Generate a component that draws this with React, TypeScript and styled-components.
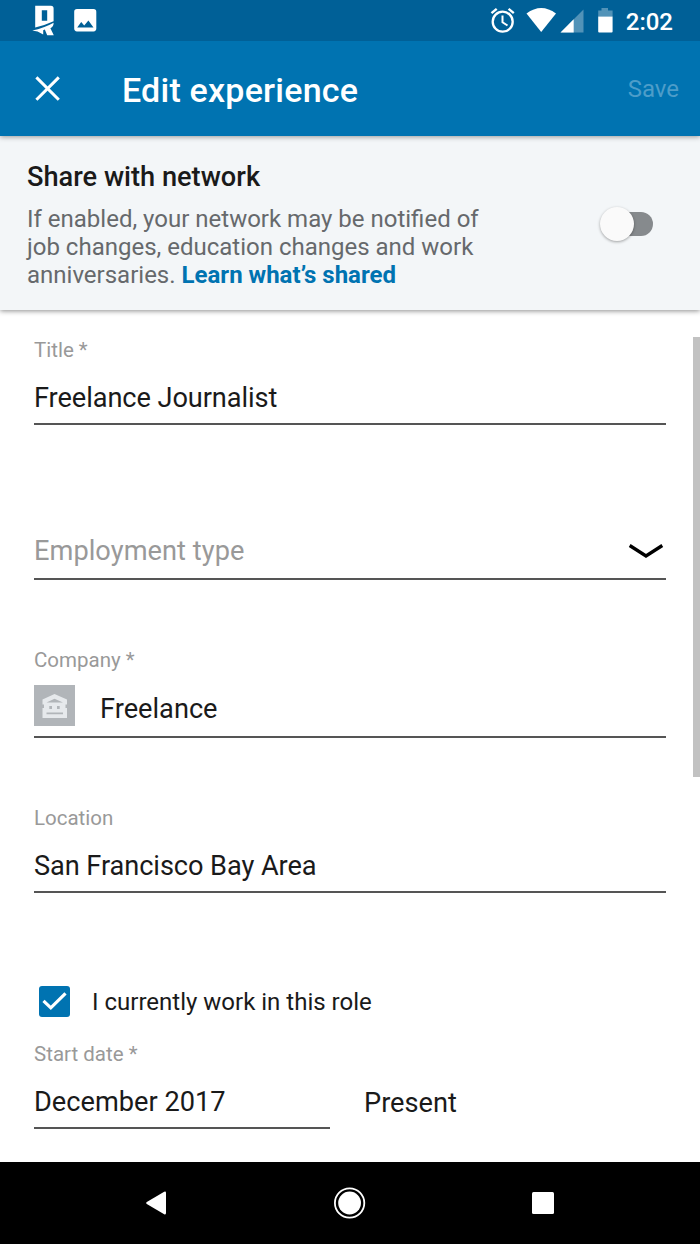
import React from "react";
import styled, { createGlobalStyle } from "styled-components";

const GlobalStyle = createGlobalStyle`
  *, *::before, *::after { box-sizing: border-box; }
  html, body { margin: 0; background: #fff; }
  body { font-family: Roboto, sans-serif; color: #1a1a1a; overflow: hidden; }
  h1, h2, p { margin: 0; }
  button { border: 0; padding: 0; background: none; font: inherit; color: inherit; }
  svg { display: block; flex: none; }
`;

const Screen = styled.div`
  width: 700px;
  height: 1244px;
  display: flex;
  flex-direction: column;
  overflow: hidden;
`;

const StatusBar = styled.div`
  position: relative;
  z-index: 3;
  height: 41px;
  flex: none;
  display: flex;
  justify-content: space-between;
  background: #006097;
  color: #fff;
`;

const Clock = styled.span`
  font-size: 24px;
  font-weight: 500;
  line-height: 28px;
  margin: 8px 27px 0 0;
`;

const StatusGroup = styled.div`
  display: flex;
`;

const AppBar = styled.header`
  position: relative;
  z-index: 2;
  height: 95px;
  flex: none;
  display: flex;
  align-items: center;
  padding: 0 21px 0 35px;
  background: #0073b1;
  color: #fff;
  box-shadow: 0 1px 5px rgba(0, 0, 0, 0.38);
`;

const AppTitle = styled.h1`
  flex: 1;
  margin-left: 61px;
  padding-top: 2px;
  font-size: 34px;
  font-weight: 500;
  line-height: 40px;
  letter-spacing: 0.22px;
`;

const SaveButton = styled.button`
  font-size: 24px;
  line-height: 28px;
  color: #4d9dc9;
`;

const ShareBanner = styled.section`
  position: relative;
  z-index: 1;
  height: 174px;
  flex: none;
  display: flex;
  justify-content: space-between;
  padding: 25px 47px 0 27px;
  background: #f3f6f8;
  box-shadow: 0 1px 5px rgba(0, 0, 0, 0.45);
`;

const ShareCopy = styled.div`
  width: 480px;
`;

const ShareTitle = styled.h2`
  font-size: 27.2px;
  font-weight: 500;
  line-height: 32px;
`;

const ShareText = styled.p`
  margin-top: 12px;
  font-size: 24px;
  line-height: 28px;
  color: #66696c;
`;

const LearnLink = styled.span`
  font-weight: 700;
  color: #0073b1;
`;

const Switch = styled.div`
  display: flex;
  align-items: center;
  width: 47px;
  height: 24px;
  margin-top: 51px;
  border-radius: 12px;
  background: #868a8d;
`;

const SwitchThumb = styled.div`
  flex: none;
  width: 34px;
  height: 34px;
  margin-left: -6px;
  border-radius: 50%;
  background: #fafafa;
  box-shadow: 0 1px 3px rgba(0, 0, 0, 0.35);
`;

const FormArea = styled.main`
  flex: 1;
  display: flex;
  justify-content: space-between;
  min-height: 0;
`;

const Form = styled.form`
  width: 666px;
  padding: 28px 0 0 34px;
`;

const ScrollThumb = styled.div`
  width: 7px;
  height: 440px;
  margin-top: 27px;
  background: #c2c2c2;
`;

const Field = styled.div<{ $gap?: number }>`
  display: flex;
  flex-direction: column;
  margin-top: ${(p) => p.$gap ?? 0}px;
`;

const Label = styled.span`
  font-size: 20.5px;
  line-height: 24px;
  color: #999;
`;

const Control = styled.div<{ $top?: number; $height: number; $width?: number }>`
  display: flex;
  align-items: flex-start;
  justify-content: space-between;
  width: ${(p) => (p.$width ? `${p.$width}px` : "100%")};
  height: ${(p) => p.$height}px;
  padding-top: ${(p) => p.$top ?? 0}px;
  border-bottom: 2px solid #555;
`;

const Value = styled.span<{ $muted?: boolean; $tracking?: number }>`
  font-size: 27.2px;
  line-height: 32px;
  letter-spacing: ${(p) => p.$tracking ?? 0}px;
  color: ${(p) => (p.$muted ? "#999" : "#1a1a1a")};
`;

const CompanyValue = styled(Value)`
  flex: 1;
  margin: 8px 0 0 25px;
`;

const CheckRow = styled.div`
  display: flex;
  align-items: center;
  margin: 93px 0 0 5px;
`;

const CheckBox = styled.div`
  width: 31px;
  height: 31px;
  border-radius: 3px;
  background: #0073b1;
`;

const CheckLabel = styled.span`
  margin-left: 22px;
  font-size: 24px;
  line-height: 28px;
  padding-top: 1px;
`;

const DateRow = styled.div`
  display: flex;
  margin-top: 25px;
`;

const Present = styled(Value)`
  margin: 45px 0 0 34px;
`;

const NavBar = styled.nav`
  height: 82px;
  flex: none;
  display: flex;
  align-items: center;
  justify-content: space-between;
  padding: 0 146px 0 145px;
  background: #000;
`;

function NotificationIcons() {
  return (
    <svg width="110" height="41" viewBox="0 0 110 41" fill="#fff">
      <path
        fillRule="evenodd"
        d="M35.200 5.700H51Q53.600 5.700 53.600 8.500V21.200Q45 25.200 35.200 27.400ZM41.800 10.200V20.800H47.200V10.200Z"
      />
      <path d="M32.200 30.600Q44 28.200 53.600 22.800Q53.800 26.400 50.400 28.200L53.800 35.200H47.200L44.800 29.600L43.200 30.200V34.600L37.600 31.400Z" />
      <path
        fillRule="evenodd"
        d="M77 9H93.500Q96.300 9 96.300 11.800V28.600Q96.300 31.400 93.500 31.400H77Q74.200 31.400 74.200 28.600V11.800Q74.200 9 77 9ZM77.200 27.400H93.500L88.400 20.400L84.200 25.400L81.200 22Z"
      />
    </svg>
  );
}

function SystemIcons() {
  return (
    <svg width="136" height="41" viewBox="490 0 136 41" fill="#fff">
      <g fill="none" stroke="#fff">
        <circle cx="502.700" cy="21.700" r="10" strokeWidth="2.300" />
        <path d="M502.500 15.500V22.300L507.500 25.500" strokeWidth="2" />
        <path d="M491.500 13.200L496.700 8.800M513.800 13.200L508.600 8.800" strokeWidth="2.400" />
      </g>
      <path d="M526.500 13.500Q541.200 2.500 556 13.500L541.200 32Z" />
      <path d="M583.500 9.500V32.500H560.500Z" fillOpacity=".32" />
      <path d="M573.700 19.300V32.500H560.500Z" />
      <path d="M601.500 8H608V10.500H612.600V16.500H598.200V10.500H601.500Z" fillOpacity=".32" />
      <path d="M598.200 16.500H612.600V31.500Q612.600 32.500 611.600 32.500H599.200Q598.200 32.500 598.200 31.500Z" />
    </svg>
  );
}

function CompanyLogo() {
  return (
    <svg width="41" height="41" viewBox="0 0 41 41">
      <rect width="41" height="41" fill="#b1b5b9" />
      <path
        fill="#e6e9ec"
        fillRule="evenodd"
        d="M20.500 9L33 14.500V19.500H31.500V23H33V33H8.500V23H10V19.500H8.500V14.500ZM12.500 17.500H29L20.500 13.800ZM15.300 21V24H18V21ZM23 21V24H25.700V21ZM12.500 27.500V29.300H29V27.500Z"
      />
    </svg>
  );
}

export default function App() {
  return (
    <Screen>
      <GlobalStyle />
      <StatusBar>
        <NotificationIcons />
        <StatusGroup>
          <SystemIcons />
          <Clock>2:02</Clock>
        </StatusGroup>
      </StatusBar>
      <AppBar>
        <svg width="26" height="26" viewBox="0 0 26 26" stroke="#fff" strokeWidth="3">
          <path d="M1.400 1.400L23.800 23.800M23.800 1.400L1.400 23.800" />
        </svg>
        <AppTitle>Edit experience</AppTitle>
        <SaveButton type="button">Save</SaveButton>
      </AppBar>
      <ShareBanner>
        <ShareCopy>
          <ShareTitle>Share with network</ShareTitle>
          <ShareText>
            If enabled, your network may be notified of
            <br />
            job changes, education changes and work
            <br />
            anniversaries. <LearnLink>Learn what’s shared</LearnLink>
          </ShareText>
        </ShareCopy>
        <Switch role="switch" aria-checked="false">
          <SwitchThumb />
        </Switch>
      </ShareBanner>
      <FormArea>
        <Form>
          <Field>
            <Label>Title *</Label>
            <Control $top={20} $height={63}>
              <Value $tracking={-0.08}>Freelance Journalist</Value>
            </Control>
          </Field>
          <Field $gap={110}>
            <Control $height={45}>
              <Value $muted $tracking={0.05}>Employment type</Value>
              <svg width="38" height="32" viewBox="0 0 38 32" fill="none" stroke="#000" strokeWidth="3.300">
                <path d="M1.700 10.500L18 21L34.300 10.500" />
              </svg>
            </Control>
          </Field>
          <Field $gap={68}>
            <Label>Company *</Label>
            <Control $top={13} $height={66}>
              <CompanyLogo />
              <CompanyValue>Freelance</CompanyValue>
            </Control>
          </Field>
          <Field $gap={68}>
            <Label>Location</Label>
            <Control $top={20} $height={63}>
              <Value $tracking={-0.08}>San Francisco Bay Area</Value>
            </Control>
          </Field>
          <CheckRow>
            <CheckBox role="checkbox" aria-checked="true">
              <svg width="31" height="31" viewBox="0 0 31 31" fill="none" stroke="#fff" strokeWidth="3.200">
                <path d="M4.500 14.800L11.800 21.800L26.500 7.300" />
              </svg>
            </CheckBox>
            <CheckLabel>I currently work in this role</CheckLabel>
          </CheckRow>
          <DateRow>
            <Field>
              <Label>Start date *</Label>
              <Control $top={20} $height={63} $width={296}>
                <Value>December 2017</Value>
              </Control>
            </Field>
            <Present>Present</Present>
          </DateRow>
        </Form>
        <ScrollThumb />
      </FormArea>
      <NavBar>
        <svg width="22" height="24" viewBox="0 0 22 24" fill="#fff">
          <path d="M1.800 11L19.200 .8Q21 0 21 2V22Q21 24 19.200 23.200L1.800 13Q.2 12 1.800 11Z" />
        </svg>
        <svg width="32" height="32" viewBox="0 0 32 32" fill="#fff">
          <circle cx="15.600" cy="16" r="14.700" fill="none" stroke="#fff" strokeWidth="1.800" />
          <circle cx="15.600" cy="16" r="11.400" />
        </svg>
        <svg width="22" height="22" viewBox="0 0 22 22" fill="#fff">
          <rect width="22" height="22" rx="1.500" />
        </svg>
      </NavBar>
    </Screen>
  );
}
